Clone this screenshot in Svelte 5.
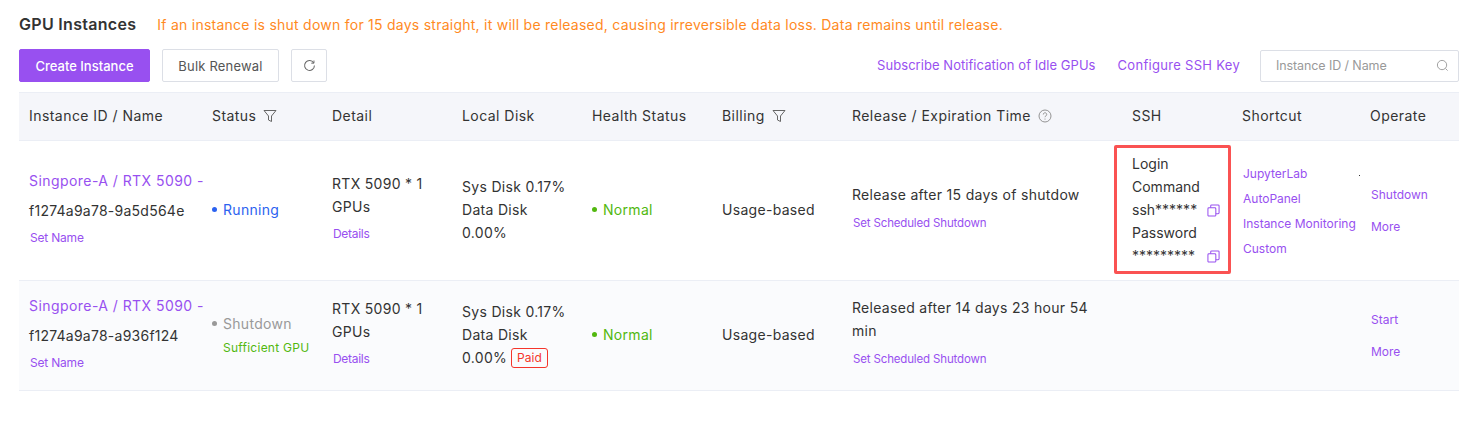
<script>
  const rows = [
    { id: 'f1274a9a78-9a5d564e', running: true, release: 'Release after 15 days of shutdow' },
    { id: 'f1274a9a78-a936f124', running: false, release: 'Released after 14 days 23 hour 54 min' }
  ];
</script>

{#snippet copy()}
  <svg class="copy" viewBox="0 0 14 14" fill="none" stroke="#9850f0" stroke-width="1.100"><rect x="1" y="4" width="8.500" height="9" rx="1"/><path d="M4 4V2a1 1 0 0 1 1-1h7a1 1 0 0 1 1 1v7.500a1 1 0 0 1-1 1H9.500"/></svg>
{/snippet}

{#snippet funnel()}
  <svg class="filter" viewBox="0 0 14 14" fill="none" stroke="#666" stroke-width="1"><path d="M1 1.500h12L8.500 7v5.500l-3-1.500V7z"/></svg>
{/snippet}

<div class="page">
  <div class="title">
    <h1>GPU Instances</h1>
    <span class="warn">If an instance is shut down for 15 days straight, it will be released, causing irreversible data loss. Data remains until release.</span>
  </div>

  <div class="toolbar">
    <button class="btn primary">Create Instance</button>
    <button class="btn bulk">Bulk Renewal</button>
    <button class="btn icon" aria-label="Refresh">
      <svg viewBox="0 0 14 14" width="13" height="13" fill="none" stroke="#666" stroke-width="1.100"><path d="M11.500 4.200A5.300 5.300 0 1 0 12.300 7"/><path d="M11.800 1.600v2.900H8.900" stroke-width="1"/></svg>
    </button>
    <div class="spacer"></div>
    <span class="link top a">Subscribe Notification of Idle GPUs</span>
    <span class="link top b">Configure SSH Key</span>
    <div class="search">
      <span>Instance ID / Name</span>
      <svg viewBox="0 0 14 14" width="13" height="13" fill="none" stroke="#999" stroke-width="1"><circle cx="6.500" cy="6.500" r="5"/><path d="M10.200 10.200l2.300 2.300"/></svg>
    </div>
  </div>

  <div class="row head">
    <div class="cell">Instance ID / Name</div>
    <div class="cell">Status {@render funnel()}</div>
    <div class="cell">Detail</div>
    <div class="cell">Local Disk</div>
    <div class="cell">Health Status</div>
    <div class="cell">Billing {@render funnel()}</div>
    <div class="cell">Release / Expiration Time <svg class="filter help" viewBox="0 0 14 14" fill="none" stroke="#888" stroke-width="0.900"><circle cx="7" cy="7" r="6"/><path d="M5.300 5.500a1.700 1.700 0 1 1 2.600 1.400c-.6.400-.9.700-.9 1.300"/><path d="M7 9.600v1"/></svg></div>
    <div class="cell">SSH</div>
    <div class="cell">Shortcut</div>
    <div class="cell">Operate</div>
  </div>

  {#each rows as r, i}
    <div class="row body" class:first={i === 0} class:second={i === 1}>
      <div class="cell stack lift">
        <span class="link name">Singpore-A / RTX 5090 -</span>
        <span class="line id">{r.id}</span>
        <span class="link small setname">Set Name</span>
      </div>
      <div class="cell up">
        {#if r.running}
          <span class="status running"><i></i>Running</span>
        {:else}
          <div class="stack">
            <span class="status off"><i></i>Shutdown</span>
            <span class="gpu">Sufficient GPU</span>
          </div>
        {/if}
      </div>
      <div class="cell stack lift">
        <span class="line">RTX 5090 * 1<br />GPUs</span>
        <span class="link small detail">Details</span>
      </div>
      <div class="cell stack up">
        <span class="line">Sys Disk 0.17%<br />Data Disk<br />0.00%{#if !r.running}<span class="paid">Paid</span>{/if}</span>
      </div>
      <div class="cell up"><span class="status ok"><i></i>Normal</span></div>
      <div class="cell up">Usage-based</div>
      <div class="cell stack relcell">
        <span class="line rel">{r.release}</span>
        <span class="link small sched">Set Scheduled Shutdown</span>
      </div>
      <div class="cell sshcell">
        {#if r.running}
          <div class="ssh">
            <div>Login</div>
            <div>Command</div>
            <div class="sec">ssh******{@render copy()}</div>
            <div>Password</div>
            <div class="sec">*********{@render copy()}</div>
          </div>
        {/if}
      </div>
      <div class="cell stack shortcuts">
        {#if r.running}
          <span class="link small">JupyterLab</span>
          <span class="link small">AutoPanel</span>
          <span class="link small">Instance Monitoring</span>
          <span class="link small">Custom</span>
          <b class="dot"></b>
        {/if}
      </div>
      <div class="cell stack ops">
        <span class="link small">{r.running ? 'Shutdown' : 'Start'}</span>
        <span class="link small">More</span>
      </div>
    </div>
  {/each}
</div>

<style>
  :global(body) {
    margin: 0;
    background: #fff;
  }
  .page {
    width: 1440px;
    height: 448px;
    padding: 0 19px;
    font-family: Inter, "Noto Sans", sans-serif;
    font-size: 14px;
    color: #333;
    letter-spacing: 0.3px;
  }
  .title {
    display: flex;
    align-items: center;
    height: 49px;
  }
  h1 {
    margin: 0 21px 0 0;
    padding-bottom: 1px;
    font-size: 16px;
    font-weight: 600;
    color: #333;
    letter-spacing: 0.3px;
  }
  .warn {
    color: #ff8a1f;
    font-size: 14px;
    letter-spacing: 0.25px;
  }
  .toolbar {
    display: flex;
    align-items: center;
    gap: 12px;
    height: 33px;
    margin-bottom: 10px;
  }
  .btn {
    box-sizing: border-box;
    height: 33px;
    padding: 0;
    border: 1px solid #dcdfe6;
    border-radius: 2px;
    background: #fff;
    color: #555;
    font: inherit;
    font-size: 13px;
    letter-spacing: 0.2px;
    white-space: nowrap;
  }
  .primary {
    width: 131px;
    background: #9850f0;
    border-color: #9850f0;
    color: #fff;
    letter-spacing: 0;
    font-weight: 500;
  }
  .bulk {
    width: 117px;
  }
  .icon {
    width: 36px;
    display: flex;
    align-items: center;
    justify-content: center;
  }
  .spacer {
    flex: 1;
  }
  .link {
    color: #9850f0;
  }
  .top {
    font-size: 13px;
    letter-spacing: 0.05px;
    white-space: nowrap;
    padding-bottom: 2px;
  }
  .top.a {
    margin-right: 10px;
  }
  .top.b {
    margin-right: 8px;
    letter-spacing: 0.3px;
  }
  .search {
    box-sizing: border-box;
    width: 199px;
    height: 32px;
    padding: 0 9px 0 15px;
    border: 1px solid #dcdfe6;
    border-radius: 2px;
    display: flex;
    align-items: center;
    justify-content: space-between;
    color: #999;
    font-size: 12.500px;
    letter-spacing: -0.1px;
    white-space: nowrap;
  }
  .row {
    display: grid;
    grid-template-columns: 183px 120px 130px 130px 130px 130px 280px 110px 128px 99px;
    border-bottom: 1px solid #ebeef5;
  }
  .head {
    height: 47px;
    background: #f5f6fa;
    border-top: 1px solid #ebeef5;
    color: #333;
    letter-spacing: 0.45px;
  }
  .head .cell {
    white-space: nowrap;
    gap: 7px;
    padding-bottom: 2px;
  }
  .filter {
    width: 14px;
    height: 14px;
    flex: none;
  }
  .first {
    height: 139px;
  }
  .second {
    height: 109px;
    background: #fafbfd;
  }
  .cell {
    padding: 0 10px;
    display: flex;
    align-items: center;
    min-width: 0;
  }
  .stack {
    display: flex;
    flex-direction: column;
    align-items: flex-start;
    justify-content: center;
  }
  .lift {
    padding-bottom: 7px;
  }
  .up {
    padding-bottom: 2px;
  }
  .relcell {
    padding-bottom: 8px;
  }
  .line {
    line-height: 23px;
  }
  .name {
    line-height: 23px;
    white-space: nowrap;
    letter-spacing: 0.44px;
  }
  .id {
    margin-top: 7px;
    white-space: nowrap;
    letter-spacing: 0.25px;
  }
  .small {
    font-size: 12px;
    letter-spacing: 0;
  }
  .setname {
    margin: 8px 0 0 1px;
    line-height: 16px;
    letter-spacing: -0.2px;
  }
  .detail {
    margin: 8px 0 0 1px;
    line-height: 16px;
    letter-spacing: -0.3px;
  }
  .sched {
    margin: 9px 0 0 1px;
    line-height: 16px;
    white-space: nowrap;
    font-size: 11.500px;
    letter-spacing: -0.15px;
  }
  .status {
    display: inline-flex;
    align-items: center;
    white-space: nowrap;
  }
  .status i {
    width: 5px;
    height: 5px;
    border-radius: 50%;
    margin-right: 6px;
    background: currentColor;
  }
  .running {
    color: #2b62f0;
  }
  .off {
    color: #999;
  }
  .ok {
    color: #52b80f;
  }
  .gpu {
    margin: 8px 0 0 11px;
    color: #52b80f;
    font-size: 12px;
    letter-spacing: 0.25px;
    white-space: nowrap;
  }
  .paid {
    display: inline-block;
    box-sizing: border-box;
    height: 20px;
    margin-left: 4px;
    padding: 0 5px;
    border: 1px solid #f5352b;
    border-radius: 3px;
    color: #f5352b;
    font-size: 12px;
    line-height: 18px;
    letter-spacing: 0;
    vertical-align: 1px;
  }
  .sshcell {
    padding: 0;
  }
  .ssh {
    box-sizing: border-box;
    width: 117px;
    height: 129px;
    margin: -2px 0 0 -8px;
    padding: 4px 8px 0 15px;
    border: 3px solid #fa5252;
    border-radius: 2px;
    line-height: 23px;
    letter-spacing: 0;
  }
  .sec {
    display: flex;
    align-items: center;
    justify-content: space-between;
  }
  .copy {
    width: 13px;
    height: 13px;
    flex: none;
    margin-top: 2px;
  }
  .shortcuts {
    position: relative;
    gap: 9px;
    padding-left: 11px;
    padding-top: 2px;
  }
  .shortcuts .small {
    white-space: nowrap;
    line-height: 16px;
  }
  .dot {
    position: absolute;
    left: 127px;
    top: 34px;
    width: 1px;
    height: 1px;
    background: #333;
  }
  .ops {
    gap: 16px;
    padding-left: 11px;
  }
  .ops .small {
    line-height: 16px;
  }
</style>
